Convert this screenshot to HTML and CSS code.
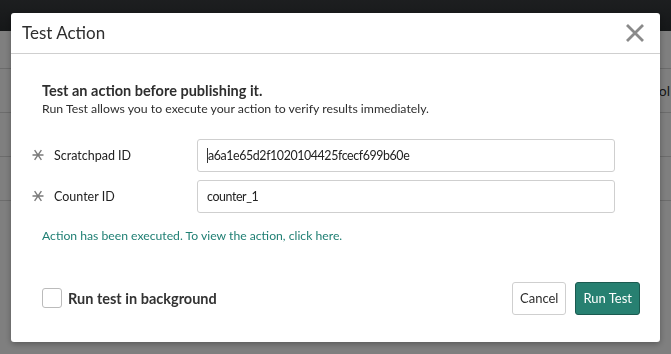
FILE: index.html
```html
<!DOCTYPE html>
<html lang="en">
<head>
    <meta charset="UTF-8">
    <title>Test Action</title>
    <link rel="stylesheet" href="styles.css">
</head>
<body>
    <div class="page">
        <div class="topbar"></div>
        <div class="page-row"></div>
        <div class="page-row tall"><span class="peek">Tool</span></div>
        <div class="page-row tall"></div>
        <div class="page-row tall"></div>
    </div>

    <div class="backdrop">
        <div class="modal">
            <div class="modal-header">
                <h4>Test Action</h4>
                <button class="btn-close" aria-label="Close">
                    <svg width="20" height="20" viewBox="0 0 20 20"><path d="M2 2 L18 18 M18 2 L2 18" stroke="#8a8a8a" stroke-width="2.8" fill="none"/></svg>
                </button>
            </div>
            <div class="modal-body">
                <div class="intro">
                    <div class="intro-title">Test an action before publishing it.</div>
                    <div class="intro-text">Run Test allows you to execute your action to verify results immediately.</div>
                </div>

                <div class="field">
                    <label class="field-label">
                        <svg class="req" width="12" height="12" viewBox="0 0 12 12"><path d="M0.5 6 H11.5 M2.6 1.2 L9.4 10.8 M9.4 1.2 L2.6 10.8" stroke="#7a7a7a" stroke-width="1.4" fill="none"/></svg>
                        Scratchpad ID
                    </label>
                    <div class="field-input"><span class="caret"></span>a6a1e65d2f1020104425fcecf699b60e</div>
                </div>
                <div class="field">
                    <label class="field-label">
                        <svg class="req" width="12" height="12" viewBox="0 0 12 12"><path d="M0.5 6 H11.5 M2.6 1.2 L9.4 10.8 M9.4 1.2 L2.6 10.8" stroke="#7a7a7a" stroke-width="1.4" fill="none"/></svg>
                        Counter ID
                    </label>
                    <div class="field-input">counter_1</div>
                </div>

                <a class="result-link">Action has been executed. To view the action, click here.</a>
            </div>
            <div class="modal-footer">
                <label class="check">
                    <span class="box"></span>
                    Run test in background
                </label>
                <div class="actions">
                    <button class="btn btn-default">Cancel</button>
                    <button class="btn btn-primary">Run Test</button>
                </div>
            </div>
        </div>
    </div>
</body>
</html>
```

FILE: styles.css
```css
body {
    margin: 0;
    font-family: Lato, "Noto Sans", sans-serif;
    color: #2e2e2e;
    background-color: #fff;
    overflow: hidden;
}

.page {
    height: 354px;
}

.topbar {
    height: 31px;
    background: linear-gradient(#3a3d40, #2b2f31);
}

.page-row {
    height: 37px;
    border-bottom: 1px solid #d8d8d8;
    position: relative;
}

.page-row.tall {
    height: 43px;
}

.peek {
    position: absolute;
    right: 1px;
    top: 13px;
    font-size: 14px;
    color: #333;
}

.backdrop {
    position: fixed;
    inset: 0;
    background-color: rgba(0, 0, 0, 0.5);
    display: flex;
    justify-content: center;
    align-items: center;
}

.modal {
    width: 649px;
    height: 329px;
    background-color: #fff;
    border-radius: 3px;
    box-shadow: 0 2px 6px rgba(0, 0, 0, 0.3);
    display: flex;
    flex-direction: column;
}

.modal-header {
    height: 40px;
    border-bottom: 1px solid #cfcfcf;
    display: flex;
    align-items: center;
    justify-content: space-between;
    padding: 0 15px 0 11px;
}

.modal-header h4 {
    margin: 0;
    font-size: 17px;
    font-weight: 400;
    color: #2e2e2e;
}

.btn-close {
    background: none;
    border: none;
    padding: 0;
    width: 20px;
    height: 20px;
    cursor: pointer;
}

.modal-body {
    flex: 1;
    padding: 27px 45px 0 31px;
}

.intro {
    margin-bottom: 21px;
}

.intro-title {
    font-size: 14.5px;
    font-weight: 700;
    line-height: 19px;
}

.intro-text {
    font-size: 12.3px;
    line-height: 18px;
}

.field {
    display: flex;
    align-items: center;
    margin-bottom: 8px;
}

.field-label {
    width: 165px;
    margin-left: -10px;
    font-size: 12.5px;
    color: #222;
    display: flex;
    align-items: center;
}

.req {
    margin-right: 10px;
}

.field-input {
    flex: 1;
    height: 31px;
    border: 1px solid #cfcfcf;
    border-radius: 3px;
    display: flex;
    align-items: center;
    padding-left: 9px;
    font-size: 12.4px;
    letter-spacing: -0.4px;
    color: #222;
}

.caret {
    width: 1px;
    height: 15px;
    background-color: #333;
}

.result-link {
    display: block;
    margin-top: 15px;
    font-size: 12.2px;
    color: #1f7f73;
    cursor: pointer;
}

.modal-footer {
    display: flex;
    justify-content: space-between;
    align-items: center;
    padding: 0 20px 27px 31px;
}

.check {
    display: flex;
    align-items: center;
    font-size: 14.5px;
    font-weight: 700;
    color: #333;
}

.box {
    width: 18px;
    height: 18px;
    border: 1px solid #bbb;
    border-radius: 3px;
    margin-right: 6px;
}

.actions {
    display: flex;
    gap: 9px;
}

.btn {
    height: 33px;
    padding: 0 7px;
    font-family: inherit;
    font-size: 13px;
    border-radius: 3px;
    cursor: pointer;
}

.btn-default {
    background-color: #fff;
    border: 1px solid #cfcfcf;
    color: #2e2e2e;
}

.btn-primary {
    background-color: #278071;
    border: 1px solid #1b5a50;
    color: #fff;
}
```
